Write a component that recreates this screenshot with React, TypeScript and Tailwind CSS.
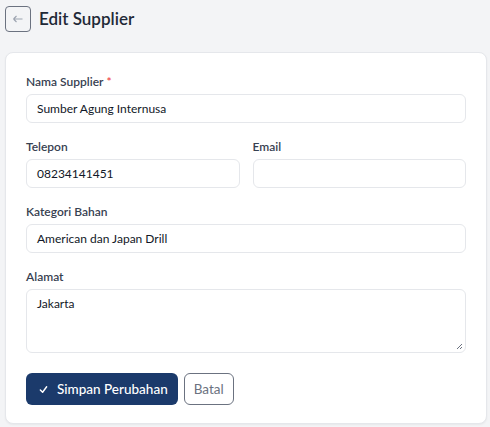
import React from "react";

const font = { fontFamily: 'Lato, "Noto Sans", sans-serif' };

function Label({ children, required }: { children: React.ReactNode; required?: boolean }) {
  return (
    <label className="block text-[12px] leading-[16px] font-semibold text-[#374151] mb-[4px]">
      {children}
      {required && <span className="text-[#ef4444] ml-[3px]">*</span>}
    </label>
  );
}

function Input({ value }: { value: string }) {
  return (
    <div className="h-[29px] w-full rounded-[6px] border border-[#e5e7eb] bg-white px-[10px] flex items-center text-[12px] text-[#111827]">
      {value}
    </div>
  );
}

export default function App() {
  return (
    <div className="min-h-screen bg-[#f3f4f6] pl-[5px] pt-[6px]" style={font}>
      <div className="flex items-center gap-[8px]">
        <button className="h-[26px] w-[26px] rounded-[4px] border border-[#6b7280] flex items-center justify-center text-[#9ca3af]">
          <svg width="12" height="12" viewBox="0 0 12 12" fill="none" stroke="currentColor" strokeWidth="1.1">
            <path d="M10.5 6H1.5M1.5 6L4.5 3M1.5 6L4.5 9" />
          </svg>
        </button>
        <h1 className="text-[17px] leading-[26px] font-semibold text-[#1f2937]">Edit Supplier</h1>
      </div>
      <div className="mt-[20px] w-[482px] rounded-[8px] border border-[#e5e7eb] bg-white px-[20px] pt-[21px] pb-[18px] shadow-[0_1px_2px_rgba(0,0,0,0.05)]">
        <div className="flex flex-col gap-[16px]">
          <div>
            <Label required>Nama Supplier</Label>
            <Input value="Sumber Agung Internusa" />
          </div>
          <div className="grid grid-cols-2 gap-[13px]">
            <div>
              <Label>Telepon</Label>
              <Input value="08234141451" />
            </div>
            <div>
              <Label>Email</Label>
              <Input value="" />
            </div>
          </div>
          <div>
            <Label>Kategori Bahan</Label>
            <Input value="American dan Japan Drill" />
          </div>
          <div>
            <Label>Alamat</Label>
            <div className="relative h-[64px] w-full rounded-[6px] border border-[#e5e7eb] bg-white px-[10px] pt-[6px] text-[12px] leading-[16px] text-[#111827]">
              Jakarta
              <svg className="absolute right-[2px] bottom-[2px]" width="8" height="8" viewBox="0 0 8 8" stroke="#6b7280" strokeWidth="1">
                <path d="M7 2L2 7M7 5L5 7" />
              </svg>
            </div>
          </div>
        </div>
        <div className="mt-[20px] flex gap-[6px]">
          <button className="h-[32px] rounded-[6px] bg-[#1b3a6b] pl-[13px] pr-[10px] flex items-center gap-[9px] text-[13.5px] font-medium text-white">
            <svg width="9" height="9" viewBox="0 0 10 10" fill="none" stroke="currentColor" strokeWidth="1.6" strokeLinecap="round" strokeLinejoin="round">
              <path d="M1.5 5.5L4 8L8.5 2" />
            </svg>
            Simpan Perubahan
          </button>
          <button className="h-[32px] w-[50px] rounded-[6px] border border-[#6b7280] bg-white text-[13.5px] text-[#6b7280]">
            Batal
          </button>
        </div>
      </div>
    </div>
  );
}
